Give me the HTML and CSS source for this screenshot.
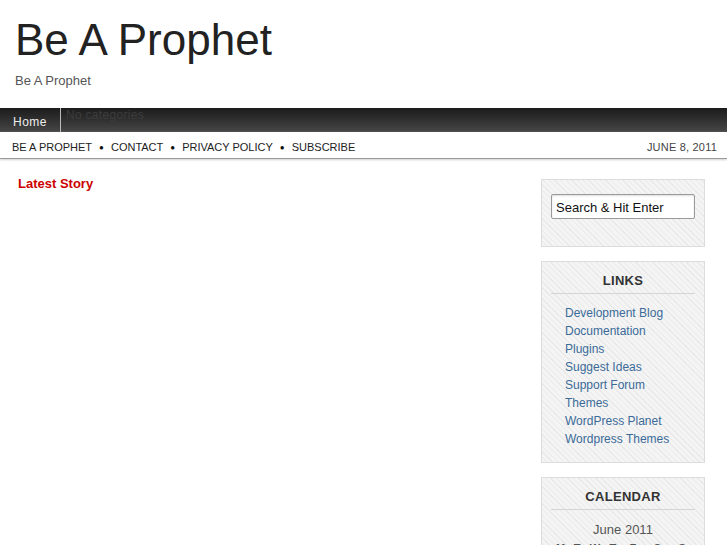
FILE: index.html
```html
<!DOCTYPE html>
<html>
<head>
<meta charset="utf-8">
<title>Be A Prophet</title>
<link rel="stylesheet" href="styles.css">
</head>
<body>
<header class="site-header">
  <h1 class="site-title">Be A Prophet</h1>
  <p class="site-desc">Be A Prophet</p>
</header>
<nav class="catbar">
  <a class="cat-home" href="#">Home</a>
  <span class="cat-none">No categories</span>
</nav>
<nav class="pagebar">
  <div class="pages">
    <a href="#">BE A PROPHET</a><span class="sep">&#9679;</span><a href="#">CONTACT</a><span class="sep">&#9679;</span><a href="#">PRIVACY POLICY</a><span class="sep">&#9679;</span><a href="#">SUBSCRIBE</a>
  </div>
  <div class="date">JUNE 8, 2011</div>
</nav>
<div class="layout">
  <main class="content">
    <h2 class="latest">Latest Story</h2>
  </main>
  <aside class="sidebar">
    <div class="widget search">
      <input class="search-input" type="text" value="Search &amp; Hit Enter">
    </div>
    <div class="widget links-widget">
      <h3 class="widget-title">LINKS</h3>
      <ul class="links">
        <li><a href="#">Development Blog</a></li>
        <li><a href="#">Documentation</a></li>
        <li><a href="#">Plugins</a></li>
        <li><a href="#">Suggest Ideas</a></li>
        <li><a href="#">Support Forum</a></li>
        <li><a href="#">Themes</a></li>
        <li><a href="#">WordPress Planet</a></li>
        <li><a href="#">Wordpress Themes</a></li>
      </ul>
    </div>
    <div class="widget">
      <h3 class="widget-title">CALENDAR</h3>
      <table class="cal">
        <caption>June 2011</caption>
        <thead>
          <tr><th>M</th><th>T</th><th>W</th><th>T</th><th>F</th><th>S</th><th>S</th></tr>
        </thead>
        <tbody>
          <tr><td></td><td></td><td>1</td><td>2</td><td>3</td><td>4</td><td>5</td></tr>
          <tr><td>6</td><td>7</td><td>8</td><td>9</td><td>10</td><td>11</td><td>12</td></tr>
        </tbody>
      </table>
    </div>
  </aside>
</div>
</body>
</html>
```
FILE: styles.css
```css
html, body {
  margin: 0;
  padding: 0;
  background: #fff;
  font-family: "Liberation Sans", Arial, sans-serif;
  color: #222;
}
a { text-decoration: none; }

.site-header {
  padding: 15px 15px 19px 15px;
  height: 74px;
}
.site-title {
  margin: 0;
  font-size: 44px;
  font-weight: normal;
  line-height: 50px;
  color: #222;
}
.site-desc {
  margin: 8px 0 0 0;
  font-size: 13px;
  line-height: 16px;
  color: #555;
}

.catbar {
  display: flex;
  height: 24px;
  background: linear-gradient(#1c1c1c, #2c2c2c 40%, #474747);
}
.cat-home {
  box-sizing: border-box;
  width: 61px;
  border-right: 1px solid #bbb;
  color: #eee;
  font-size: 12px;
  letter-spacing: 0.5px;
  line-height: 28px;
  padding-left: 13px;
}
.cat-none {
  color: #3d3d3d;
  font-size: 12px;
  letter-spacing: 0.3px;
  line-height: 14px;
  padding-left: 5px;
}

.pagebar {
  display: flex;
  justify-content: space-between;
  align-items: center;
  height: 27px;
  padding: 3px 10px 0 12px;
  box-sizing: border-box;
  border-bottom: 1px solid #9a9a9a;
  box-shadow: 0 1px 2px #d0d0d0;
  font-size: 11px;
}
.pages a { color: #222; }
.pages .sep {
  display: inline-block;
  font-size: 8px;
  vertical-align: 1px;
  margin: 0 7px 0 7px;
  color: #111;
}
.date { color: #444; letter-spacing: 0.2px; }

.layout {
  display: flex;
  padding: 0 22px 0 18px;
}
.content { flex: 1; }
.latest {
  margin: 17px 0 0 0;
  font-size: 13px;
  line-height: 16px;
  color: #cc0000;
  font-weight: bold;
}

.sidebar {
  width: 164px;
  padding-top: 20px;
}
.widget {
  border: 1px solid #dcdcdc;
  background-color: #f2f2f2;
  background-image: repeating-linear-gradient(45deg, #f4f4f4 0px, #f4f4f4 3px, #e9e9e9 3px, #e9e9e9 4px);
  margin-bottom: 14px;
  padding: 11px 9px 16px 9px;
}
.widget.search {
  padding: 14px 9px 27px 9px;
}
.links-widget {
  padding-bottom: 14px;
}
.search-input {
  display: block;
  box-sizing: border-box;
  width: 144px;
  height: 25px;
  margin: 0;
  padding: 1px 4px 0 4px;
  border: 1px solid #9a9a9a;
  border-radius: 2px;
  box-shadow: inset 0 1px 2px #ddd;
  background: #fff;
  font-family: "Liberation Sans", Arial, sans-serif;
  font-size: 13px;
  color: #111;
}
.widget-title {
  margin: 0;
  padding-bottom: 4px;
  border-bottom: 1px solid #d4d4d4;
  text-align: center;
  font-size: 13px;
  line-height: 16px;
  font-weight: bold;
  color: #333;
  letter-spacing: 0.3px;
}
.links {
  list-style: none;
  margin: 10px 0 0 0;
  padding: 0 0 0 14px;
}
.links li {
  font-size: 12px;
  line-height: 18px;
}
.links a { color: #3b6b99; }

.cal {
  width: 100%;
  border-collapse: collapse;
  margin-top: 12px;
  font-size: 11px;
  color: #555;
}
.cal caption {
  font-size: 13px;
  line-height: 16px;
  color: #555;
  padding-bottom: 3px;
}
.cal th, .cal td {
  text-align: center;
  padding: 1px 0;
  font-weight: bold;
}
.cal td { font-weight: normal; }
```
